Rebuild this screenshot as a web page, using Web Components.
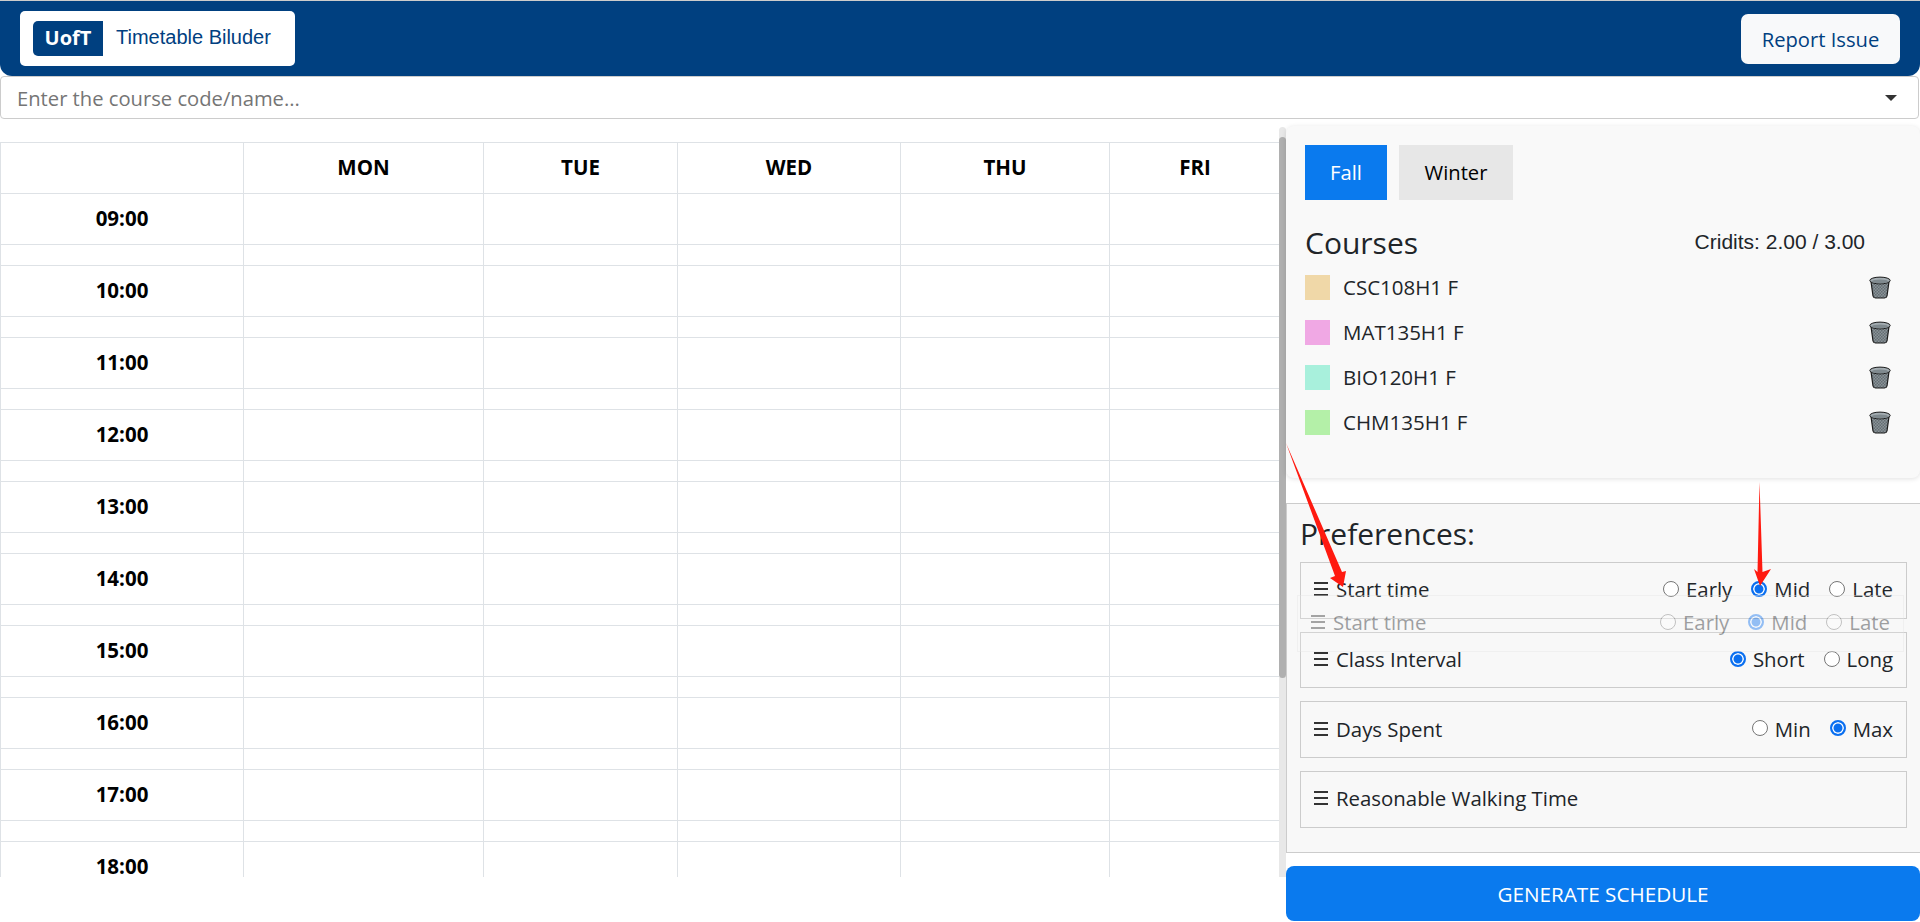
<!DOCTYPE html>
<html lang="en">
<head>
<meta charset="utf-8">
<title>UofT Timetable Biluder</title>
<style>
  html, body { margin: 0; height: 100%; background: #fff; overflow: hidden; }
  body { font-family: "Open Sans", "Liberation Sans", sans-serif; color: #212529; }
</style>
</head>
<body>
<timetable-app></timetable-app>

<script>
const SANS = '"Open Sans", "Liberation Sans", sans-serif';

class AppHeader extends HTMLElement {
  constructor() {
    super();
    this.attachShadow({ mode: 'open' });
    this.shadowRoot.innerHTML = `
      <style>
        :host {
          display: flex; align-items: center; justify-content: space-between;
          box-sizing: border-box; height: 76px; padding: 0 20px;
          background: #004080; border-top: 1px solid #ccc;
          border-radius: 0 0 12px 12px;
        }
        .logo {
          display: flex; align-items: center; gap: 13px; box-sizing: border-box;
          width: 275px; height: 55px; padding-left: 13px;
          background: #fff; border-radius: 5px;
        }
        .mark {
          display: flex; align-items: center; justify-content: center;
          width: 70px; height: 35px; padding-bottom: 2px; box-sizing: border-box;
          background: #004080; color: #fff;
          border-radius: 5px 0 0 5px; font: 700 20px ${SANS};
        }
        .name { font: 20px "Liberation Sans", Arial, sans-serif; color: #004080; margin-top: -2px; }
        button {
          width: 159px; height: 50px; margin-top: 1px; border: 0; padding: 0;
          background: #f8f9fa; color: #004080; border-radius: 7px;
          font: 20.2px ${SANS};
        }
      </style>
      <div class="logo"><span class="mark">UofT</span><span class="name">Timetable Biluder</span></div>
      <button>Report Issue</button>
    `;
  }
}

class CourseSearch extends HTMLElement {
  constructor() {
    super();
    this.attachShadow({ mode: 'open' });
    this.shadowRoot.innerHTML = `
      <style>
        :host {
          display: flex; align-items: center; justify-content: space-between;
          box-sizing: border-box; height: 43px; margin-right: 1px; padding: 0 21px 0 16px;
          border: 1px solid #ccc; border-radius: 4px; background: #fff;
          font: 20.2px ${SANS}; color: #757575;
        }
        i { width: 0; height: 0; border: 6px solid transparent; border-top-color: #333; border-bottom: 0; }
      </style>
      <span>Enter the course code/name...</span><i></i>
    `;
  }
}

class TimeTable extends HTMLElement {
  constructor() {
    super();
    this.attachShadow({ mode: 'open' });
    const hours = ['09:00','10:00','11:00','12:00','13:00','14:00','15:00','16:00','17:00','18:00'];
    const blanks = '<td></td>'.repeat(5);
    const rows = hours.map(h => `
      <tr class="hour"><th>${h}</th>${blanks}</tr>
      <tr class="half"><td></td>${blanks}</tr>`).join('');
    this.shadowRoot.innerHTML = `
      <style>
        :host { display: block; }
        table { border-collapse: collapse; table-layout: fixed; width: 1280px; }
        th, td { border: 1px solid #dee2e6; padding: 0; text-align: center; box-sizing: border-box; }
        th { padding-bottom: 3px; font: 700 20.5px ${SANS}; color: #000; }
        tr.hour, tr.head { height: 51px; }
        tr.half { height: 21px; }
      </style>
      <table>
        <colgroup><col style="width:243px"><col style="width:240px"><col style="width:194px"><col style="width:223px"><col style="width:209px"><col style="width:171px"></colgroup>
        <tr class="head"><th></th><th>MON</th><th>TUE</th><th>WED</th><th>THU</th><th>FRI</th></tr>
        ${rows}
      </table>
    `;
  }
}

class ScrollBar extends HTMLElement {
  constructor() {
    super();
    this.attachShadow({ mode: 'open' });
    this.shadowRoot.innerHTML = `
      <style>
        :host { display: block; width: 7px; background: #e8e8e8; border-radius: 4px 4px 0 0; padding-top: 10px; box-sizing: border-box; }
        div { height: 541px; background: #b0b0b0; border-radius: 4px; }
      </style>
      <div></div>
    `;
  }
}

class CourseRow extends HTMLElement {
  constructor() {
    super();
    this.attachShadow({ mode: 'open' });
    this.shadowRoot.innerHTML = `
      <style>
        :host { display: flex; align-items: center; height: 25px; font: 20.5px ${SANS}; color: #212529; }
        .swatch { width: 25px; height: 25px; margin-right: 13px; background: var(--swatch); }
        .code { margin-top: -2px; }
        svg { margin-left: auto; margin-right: 29px; }
      </style>
      <span class="swatch"></span><span class="code"><slot></slot></span>
      <svg width="22" height="23" viewBox="0 0 22 23">
        <defs><pattern id="mesh" width="3" height="3" patternUnits="userSpaceOnUse">
          <rect width="3" height="3" fill="#8b9499"/><rect width="1.5" height="1.5" fill="#646d72"/><rect x="1.5" y="1.5" width="1.5" height="1.5" fill="#646d72"/>
        </pattern></defs>
        <path d="M2 5.5 L4 20 Q4.4 22 6.5 22 H15.5 Q17.6 22 18 20 L20 5.5 Z" fill="url(#mesh)" stroke="#1a1a1a" stroke-width="1.2"/>
        <ellipse cx="11" cy="4.5" rx="10.2" ry="3.4" fill="#a4adb2" stroke="#1a1a1a" stroke-width="1"/>
        <ellipse cx="11" cy="5.4" rx="8" ry="1.9" fill="#808a8f"/>
      </svg>
    `;
    this.style.setProperty('--swatch', this.getAttribute('color'));
  }
}

class CoursePanel extends HTMLElement {
  constructor() {
    super();
    this.attachShadow({ mode: 'open' });
    this.shadowRoot.innerHTML = `
      <style>
        :host {
          display: block; box-sizing: border-box; height: 352px; padding: 19px 0 0 19px;
          background: #f9f9f9; border-radius: 8px; box-shadow: 0 1px 5px rgba(0,0,0,.12);
        }
        .tabs { display: flex; gap: 12px; }
        .tabs button { height: 55px; border: 0; padding: 0 0 2px; font: 20.2px ${SANS}; background: #e7e7e7; color: #000; }
        .fall { width: 82px; background: #0a7aee !important; color: #fff !important; }
        .winter { width: 114px; }
        .title { display: flex; align-items: center; justify-content: space-between; height: 40px; margin-top: 22px; padding-right: 55px; }
        h2 { margin: 0; font: 400 30px ${SANS}; color: #212529; }
        .credits { font: 21px "Liberation Sans", Arial, sans-serif; color: #212529; }
        .list { display: flex; flex-direction: column; gap: 20px; margin-top: 13px; }
      </style>
      <div class="tabs"><button class="fall">Fall</button><button class="winter">Winter</button></div>
      <div class="title"><h2>Courses</h2><span class="credits">Cridits: 2.00 / 3.00</span></div>
      <div class="list"><slot></slot></div>
    `;
  }
}

class RadioOption extends HTMLElement {
  constructor() {
    super();
    this.attachShadow({ mode: 'open' });
    this.shadowRoot.innerHTML = `
      <style>
        :host { display: flex; align-items: center; gap: 7px; font: 20.4px ${SANS}; color: #212529; }
        i { box-sizing: border-box; width: 16px; height: 16px; margin-top: -1px; border: 1.3px solid #767676; border-radius: 50%; background: #fff; }
        :host([checked]) i { border: 2px solid #0a6ff0; box-shadow: inset 0 0 0 1.5px #fff; background: #0a6ff0; }
      </style>
      <i></i><slot></slot>
    `;
  }
}

class PrefItem extends HTMLElement {
  constructor() {
    super();
    this.attachShadow({ mode: 'open' });
    this.shadowRoot.innerHTML = `
      <style>
        :host {
          display: flex; align-items: center; box-sizing: border-box; height: 56.7px;
          padding: 0 13px 2px; border: 1px solid #ccc; font: 20.4px ${SANS}; color: #212529;
        }
        :host([ghost]) { position: absolute; left: 10px; top: 91px; width: 607px; opacity: .42; border-color: #e6e6e6; background: rgba(255,255,255,.35); }
        .grip { display: flex; flex-direction: column; gap: 4px; width: 14px; margin-right: 8px; }
        .grip b { height: 2px; background: #333; }
        .options { display: flex; gap: 19px; margin-left: auto; }
      </style>
      <span class="grip"><b></b><b></b><b></b></span>
      <slot name="label"></slot>
      <div class="options"><slot></slot></div>
    `;
  }
}

class PrefPanel extends HTMLElement {
  constructor() {
    super();
    this.attachShadow({ mode: 'open' });
    this.shadowRoot.innerHTML = `
      <style>
        :host {
          display: block; position: relative; box-sizing: border-box; height: 350px; padding: 10px 13px 0;
          background: #f8f8f8; border: 1px solid #ccc; border-right: 0;
        }
        h2 { margin: 0 0 8px 0; height: 40px; font: 400 30px/40px ${SANS}; color: #212529; }
        .items { display: flex; flex-direction: column; gap: 13px; }
      </style>
      <h2>Preferences:</h2>
      <div class="items"><slot></slot></div>
      <slot name="ghost"></slot>
    `;
  }
}

class GenerateButton extends HTMLElement {
  constructor() {
    super();
    this.attachShadow({ mode: 'open' });
    this.shadowRoot.innerHTML = `
      <style>
        :host { display: block; }
        button { display: block; width: 100%; height: 55px; border: 0; border-radius: 8px; background: #0a7aee; color: #fff; font: 20.7px ${SANS}; }
      </style>
      <button><slot></slot></button>
    `;
  }
}

// the two red arrows drawn over the screenshot, free placed on purpose
class RedArrows extends HTMLElement {
  constructor() {
    super();
    this.attachShadow({ mode: 'open' });
    this.shadowRoot.innerHTML = `
      <style>:host { position: absolute; left: 0; top: 0; pointer-events: none; } svg { display: block; }</style>
      <svg width="1920" height="922" viewBox="0 0 1920 922">
        <polygon fill="#ff1a10" points="1286,443 1342,572 1346,571 1343,587 1330,578 1335,576"/>
        <polygon fill="#ff1a10" points="1759.5,482 1762.5,572 1771,569 1760,586 1754,569 1757.5,572"/>
      </svg>
    `;
  }
}

class TimetableApp extends HTMLElement {
  constructor() {
    super();
    this.attachShadow({ mode: 'open' });
    this.shadowRoot.innerHTML = `
      <style>
        :host { display: block; position: relative; width: 1920px; height: 922px; overflow: hidden; }
        .main { display: flex; align-items: flex-start; }
        .left { display: flex; flex: none; width: 1286px; height: 750px; margin-top: 8px; }
        .table-wrap { flex: none; width: 1279px; height: 750px; padding-top: 15px; box-sizing: border-box; overflow: hidden; }
        scroll-bar { flex: none; height: 750px; }
        .right { flex: 1; display: flex; flex-direction: column; padding-top: 7px; }
        pref-panel { margin-top: 25px; }
        generate-button { margin-top: 13px; }
      </style>
      <app-header></app-header>
      <course-search></course-search>
      <div class="main">
        <div class="left">
          <div class="table-wrap"><time-table></time-table></div>
          <scroll-bar></scroll-bar>
        </div>
        <div class="right">
          <course-panel>
            <course-row color="#f0d8a8">CSC108H1 F</course-row>
            <course-row color="#f0a8e4">MAT135H1 F</course-row>
            <course-row color="#a8f0dc">BIO120H1 F</course-row>
            <course-row color="#b4f0a8">CHM135H1 F</course-row>
          </course-panel>
          <pref-panel>
            <pref-item><span slot="label">Start time</span>
              <radio-option>Early</radio-option><radio-option checked>Mid</radio-option><radio-option>Late</radio-option></pref-item>
            <pref-item><span slot="label">Class Interval</span>
              <radio-option checked>Short</radio-option><radio-option>Long</radio-option></pref-item>
            <pref-item><span slot="label">Days Spent</span>
              <radio-option>Min</radio-option><radio-option checked>Max</radio-option></pref-item>
            <pref-item><span slot="label">Reasonable Walking Time</span></pref-item>
            <pref-item slot="ghost" ghost><span slot="label">Start time</span>
              <radio-option>Early</radio-option><radio-option checked>Mid</radio-option><radio-option>Late</radio-option></pref-item>
          </pref-panel>
          <generate-button>GENERATE SCHEDULE</generate-button>
        </div>
      </div>
      <red-arrows></red-arrows>
    `;
  }
}

customElements.define('app-header', AppHeader);
customElements.define('course-search', CourseSearch);
customElements.define('time-table', TimeTable);
customElements.define('scroll-bar', ScrollBar);
customElements.define('course-row', CourseRow);
customElements.define('course-panel', CoursePanel);
customElements.define('radio-option', RadioOption);
customElements.define('pref-item', PrefItem);
customElements.define('pref-panel', PrefPanel);
customElements.define('generate-button', GenerateButton);
customElements.define('red-arrows', RedArrows);
customElements.define('timetable-app', TimetableApp);
</script>
</body>
</html>
